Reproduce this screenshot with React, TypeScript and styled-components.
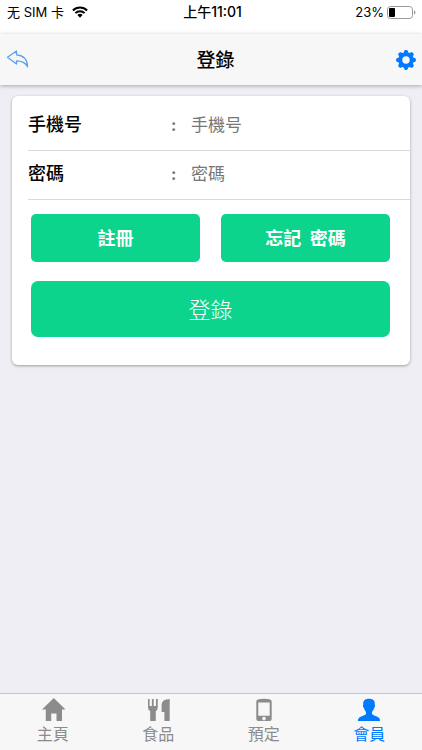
import React from "react";
import styled, { createGlobalStyle } from "styled-components";

const GlobalStyle = createGlobalStyle`
  * { box-sizing: border-box; }
  body {
    margin: 0;
    background: #efeef4;
    color: #000;
    font-family: Inter, "Noto Sans CJK TC", sans-serif;
  }
  button, input { font-family: inherit; }
`;

const Screen = styled.div`
  min-height: 100vh;
  display: flex;
  flex-direction: column;
`;

const StatusBar = styled.header`
  height: 34px;
  padding: 0 6px 10px 7px;
  display: grid;
  grid-template-columns: 1fr auto 1fr;
  align-items: center;
  background: #fff;
  font-size: 13px;
  line-height: 24px;
`;

const StatusGroup = styled.div<{ $end?: boolean }>`
  display: flex;
  align-items: center;
  justify-content: ${(p) => (p.$end ? "flex-end" : "flex-start")};
  gap: ${(p) => (p.$end ? "3px" : "8px")};
  white-space: nowrap;
`;

const Clock = styled.time`
  padding-left: 2px;
  font-size: 14px;
  font-weight: 500;
`;

const NavBar = styled.div`
  height: 51px;
  padding: 0 4px 0 6px;
  display: flex;
  align-items: center;
  background: #f7f7f7;
  box-shadow: 0 1px 4px rgba(0, 0, 0, 0.3);
`;

const Title = styled.h1`
  flex: 1;
  margin: 0;
  padding: 2px 0 0 8px;
  text-align: center;
  font-size: 19px;
  line-height: 28px;
  font-weight: 500;
`;

const IconButton = styled.button`
  display: flex;
  padding: 0;
  border: 0;
  background: none;
  color: #007aff;
`;

const Main = styled.main`
  flex: 1;
  padding: 11px 12px;
`;

const Card = styled.form`
  padding-bottom: 28px;
  border-radius: 6px;
  background: #fff;
  box-shadow: 0 1px 3px rgba(0, 0, 0, 0.35);
`;

const Fields = styled.div`
  padding: 6px 0 0 16px;
`;

const Field = styled.div`
  height: 49px;
  padding-bottom: 3px;
  display: flex;
  align-items: center;
  border-bottom: 1px solid #d9d8dc;
`;

const Label = styled.label`
  width: 143px;
  font-size: 18px;
  line-height: 26px;
  font-weight: 500;
`;

const Colon = styled.span`
  width: 20px;
  font-size: 16px;
  line-height: 24px;
  font-weight: 700;
  color: #777;
`;

const TextInput = styled.input`
  flex: 1;
  min-width: 0;
  height: 40px;
  padding: 0;
  border: 0;
  outline: 0;
  background: none;
  font-size: 17px;
  &::placeholder { color: #777; opacity: 1; }
`;

const Actions = styled.div`
  padding: 14px 20px 0 19px;
  display: grid;
  grid-template-columns: 1fr 1fr;
  gap: 19px 21px;
`;

const ActionButton = styled.button<{ $large?: boolean }>`
  grid-column: ${(p) => (p.$large ? "1 / -1" : "auto")};
  height: ${(p) => (p.$large ? "56px" : "48px")};
  padding: 0 0 2px;
  border: 0;
  border-radius: ${(p) => (p.$large ? "7px" : "5px")};
  background: #0dd48c;
  color: #fff;
  font-size: ${(p) => (p.$large ? "22px" : "18px")};
  font-weight: ${(p) => (p.$large ? 300 : 700)};
  white-space: pre;
`;

const TabBar = styled.nav`
  height: 57px;
  display: grid;
  grid-template-columns: repeat(4, 1fr);
  border-top: 1px solid #c6c5cb;
  background: #f7f7f7;
`;

const Tab = styled.a<{ $active?: boolean }>`
  padding-top: 3px;
  display: flex;
  flex-direction: column;
  align-items: center;
  color: ${(p) => (p.$active ? "#007aff" : "#8c8c8c")};
  font-size: 16px;
  line-height: 22px;
  text-decoration: none;
`;

const WifiIcon = () => (
  <svg width="16" height="12" viewBox="0 0 16 12" fill="none" stroke="#000" strokeWidth="2" aria-hidden="true">
    <path d="M.9 4.5a10.2 10.2 0 0 1 14.2 0M3.4 7.1a6.6 6.6 0 0 1 9.2 0" />
    <path d="M8 11.7 5.4 9.1a3.7 3.7 0 0 1 5.2 0z" fill="#000" stroke="none" />
  </svg>
);

const BatteryIcon = () => (
  <svg width="29" height="13" viewBox="0 0 29 13" aria-hidden="true">
    <rect x=".5" y=".5" width="25" height="12" rx="3" fill="#fff" stroke="#999" />
    <rect x="2" y="2" width="6" height="9" rx="1" fill="#000" />
    <path d="M27 4.5c2 .8 2 3.2 0 4z" fill="#999" />
  </svg>
);

const BackIcon = () => (
  <svg width="23" height="20" viewBox="0 0 23 20" fill="none" stroke="#5a9fec" strokeWidth="1.3" strokeLinejoin="round" aria-hidden="true">
    <path d="M1.5 7.2 10.5 1v3.8c6.5.4 10.8 4.6 11.1 12-2.1-4.2-5.4-6-11.1-6v3.2z" />
  </svg>
);

const GearIcon = () => (
  <svg width="24" height="24" viewBox="-12 -12 24 24" fill="currentColor" aria-hidden="true">
    <circle r="5.6" fill="none" stroke="currentColor" strokeWidth="3.8" />
    {[0, 45, 90, 135, 180, 225, 270, 315].map((angle) => (
      <path key={angle} d="M-2.9-6.5-1.7-9.1Q-1.4-9.9-.8-9.9H.8Q1.4-9.9 1.7-9.1L2.9-6.5z" transform={`rotate(${angle})`} />
    ))}
  </svg>
);

const HomeIcon = () => (
  <svg width="26" height="26" viewBox="0 0 26 26" fill="currentColor" aria-hidden="true">
    <path d="M13.8 1 25.5 12.5H22V24H16.5V16.5H11.2V24H5.8V12.5H2z" />
  </svg>
);

const FoodIcon = () => (
  <svg width="26" height="26" viewBox="0 0 26 26" fill="currentColor" aria-hidden="true">
    <path d="M3 2H4.6V9H6.9V2H8.7V9H11V2H12.8V10Q12.8 13 10.8 14V24H5.2V14Q3 13 3 10zM24.7 2V24H19.4V15H16.6V8Q16.6 2 24.7 2z" />
  </svg>
);

const PhoneIcon = () => (
  <svg width="26" height="26" viewBox="0 0 26 26" fill="currentColor" fillRule="evenodd" aria-hidden="true">
    <path d="M5.3 4Q6 1.7 13 1.7T20.7 4V22Q20.7 24 18.7 24H7.3Q5.3 24 5.3 22V4zM7.3 5.5V18.7H18.7V5.5zM13 19.7a1.8 1.8 0 1 0 .01 0z" />
  </svg>
);

const PersonIcon = () => (
  <svg width="26" height="26" viewBox="0 0 26 26" fill="currentColor" aria-hidden="true">
    <path d="M13 1.8C17.3 1.8 19 4 18.8 7.3C19.4 8.8 18.8 10.7 18 11.2Q17.5 13.5 16 14.9V17Q17 18.2 20.8 19.4C23.2 20.2 24 21.4 24.2 24H1.8C2 21.4 2.8 20.2 5.2 19.4Q9 18.2 10 17V14.9Q8.5 13.5 8 11.2C7.2 10.7 6.6 8.8 7.2 7.3C7 4 8.7 1.8 13 1.8z" />
  </svg>
);

const tabs = [
  { label: "主頁", href: "#home", Icon: HomeIcon },
  { label: "食品", href: "#food", Icon: FoodIcon },
  { label: "預定", href: "#booking", Icon: PhoneIcon },
  { label: "會員", href: "#member", Icon: PersonIcon, active: true },
];

export default function App() {
  return (
    <Screen lang="zh-Hant">
      <GlobalStyle />
      <StatusBar>
        <StatusGroup>
          <span>无 SIM 卡</span>
          <WifiIcon />
        </StatusGroup>
        <Clock>上午11:01</Clock>
        <StatusGroup $end>
          <span>23%</span>
          <BatteryIcon />
        </StatusGroup>
      </StatusBar>
      <NavBar>
        <IconButton type="button" aria-label="返回"><BackIcon /></IconButton>
        <Title>登錄</Title>
        <IconButton type="button" aria-label="設定"><GearIcon /></IconButton>
      </NavBar>
      <Main>
        <Card onSubmit={(e) => e.preventDefault()}>
          <Fields>
            <Field>
              <Label htmlFor="phone">手機号</Label>
              <Colon>:</Colon>
              <TextInput id="phone" type="tel" placeholder="手機号" />
            </Field>
            <Field>
              <Label htmlFor="password">密碼</Label>
              <Colon>:</Colon>
              <TextInput id="password" type="password" placeholder="密碼" />
            </Field>
          </Fields>
          <Actions>
            <ActionButton type="button">註冊</ActionButton>
            <ActionButton type="button">{"忘記  密碼"}</ActionButton>
            <ActionButton type="submit" $large>登錄</ActionButton>
          </Actions>
        </Card>
      </Main>
      <TabBar>
        {tabs.map(({ label, href, Icon, active }) => (
          <Tab key={label} href={href} $active={active} aria-current={active ? "page" : undefined}>
            <Icon />
            {label}
          </Tab>
        ))}
      </TabBar>
    </Screen>
  );
}
